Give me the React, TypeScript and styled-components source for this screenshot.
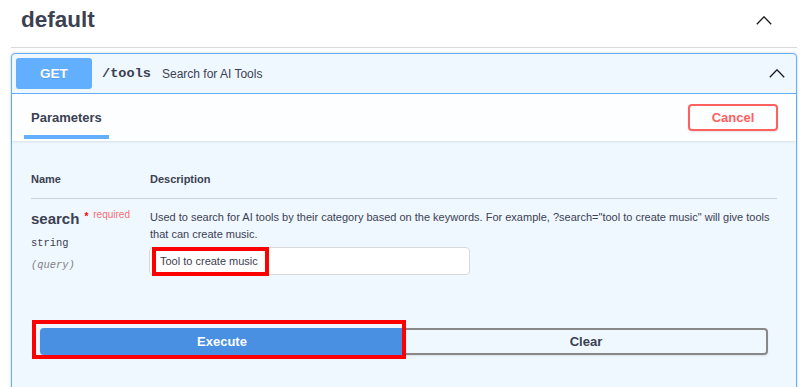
import React from "react";
import styled, { createGlobalStyle } from "styled-components";

const Global = createGlobalStyle`
  html, body { margin: 0; padding: 0; background: #fff; }
  body { font-family: "Liberation Sans", Arial, sans-serif; color: #3b4151; overflow: hidden; width: 800px; height: 387px; }
  * { box-sizing: border-box; }
`;

const Page = styled.div`
  padding: 0 3px 0 11px;
`;

const TagHeader = styled.div`
  display: flex;
  align-items: center;
  justify-content: space-between;
  height: 48px;
  padding: 0 25px 6px 10px;
  border-bottom: 1px solid #d9d9d9;
`;

const TagTitle = styled.h3`
  margin: 0;
  font-size: 22.5px;
  font-weight: 700;
  color: #3b4151;
  line-height: 1;
`;

const Chevron = styled.svg`
  display: block;
  flex: none;
`;

const OpBlock = styled.div`
  margin-top: 5px;
  border: 1px solid #61affe;
  border-radius: 4px;
  background: #eff7ff;
  box-shadow: 0 0 3px rgba(0, 0, 0, 0.19);
  height: 400px;
`;

const Summary = styled.div`
  display: flex;
  align-items: center;
  height: 40px;
  padding: 0 11px 0 4px;
  border-bottom: 1px solid #61affe;
`;

const MethodBadge = styled.span`
  display: flex;
  align-items: center;
  justify-content: center;
  width: 76px;
  height: 31px;
  border-radius: 3px;
  background: #61affe;
  color: #fff;
  font-weight: 700;
  font-size: 13.5px;
  text-shadow: 0 1px 0 rgba(0, 0, 0, 0.1);
`;

const Path = styled.span`
  margin-left: 10px;
  font-family: "Liberation Mono", "DejaVu Sans Mono", monospace;
  font-weight: 700;
  font-size: 13.6px;
  color: #3b4151;
`;

const SummaryDesc = styled.span`
  flex: 1;
  margin-left: 11px;
  font-size: 12px;
  color: #3b4151;
`;

const SectionHeader = styled.div`
  display: flex;
  align-items: center;
  justify-content: space-between;
  height: 47px;
  padding: 0 18px 0 7px;
  background: rgba(255, 255, 255, 0.8);
  box-shadow: 0 1px 2px rgba(0, 0, 0, 0.1);
`;

const TabItem = styled.div`
  position: relative;
  align-self: stretch;
  display: flex;
  align-items: center;
  padding: 0 12px;
  font-size: 13px;
  font-weight: 700;
  color: #3b4151;
  &::after {
    content: "";
    position: absolute;
    left: 5px;
    right: 5px;
    bottom: 2px;
    height: 4px;
    background: #61affe;
  }
`;

const OutlineButton = styled.button<{ $tone: "red" | "gray" }>`
  font-family: "Liberation Sans", Arial, sans-serif;
  font-weight: 700;
  font-size: 13px;
  background: transparent;
  cursor: pointer;
  padding: 0;
  border: 2px solid ${(p) => (p.$tone === "red" ? "#ff6060" : "#888")};
  color: ${(p) => (p.$tone === "red" ? "#ff6060" : "#3b4151")};
  border-radius: 4px;
  box-shadow: 0 1px 2px rgba(0, 0, 0, 0.1);
`;

const CancelButton = styled(OutlineButton)`
  width: 90px;
  height: 27px;
`;

const Body = styled.div`
  padding: 28px 19px 0 19px;
`;

const Table = styled.div`
  display: grid;
  grid-template-columns: 119px 1fr;
`;

const HeadCell = styled.div`
  font-size: 11px;
  font-weight: 700;
  line-height: 20px;
  padding-bottom: 9px;
  border-bottom: 1px solid rgba(59, 65, 81, 0.2);
`;

const NameCell = styled.div`
  padding-top: 11px;
`;

const ParamName = styled.div`
  display: flex;
  align-items: flex-start;
  font-size: 15px;
  font-weight: 700;
  line-height: 18px;
`;

const Star = styled.span`
  color: red;
  font-size: 10px;
  line-height: 10px;
  margin-left: 5px;
  margin-top: 2px;
`;

const Required = styled.span`
  color: rgba(255, 0, 0, 0.6);
  font-size: 10px;
  font-weight: 400;
  line-height: 10px;
  margin-left: 5px;
`;

const ParamType = styled.div`
  font-family: "Liberation Mono", "DejaVu Sans Mono", monospace;
  font-size: 10.4px;
  margin-top: 8px;
  line-height: 14px;
`;

const ParamIn = styled.div`
  font-family: "Liberation Mono", "DejaVu Sans Mono", monospace;
  font-style: italic;
  font-size: 10.4px;
  color: #808080;
  margin-top: 8px;
  line-height: 14px;
`;

const DescCell = styled.div`
  padding-top: 10px;
`;

const DescText = styled.p`
  margin: 0;
  font-size: 11px;
  line-height: 16.5px;
  color: #3b4151;
  max-width: 630px;
`;

const InputWrap = styled.div`
  position: relative;
  width: 321px;
  margin-top: 5px;
  margin-left: -1px;
`;

const TextInput = styled.input`
  display: block;
  width: 100%;
  height: 28px;
  padding: 0 10px;
  border: 1px solid #d9d9d9;
  border-radius: 4px;
  background: #fff;
  font-family: "Liberation Sans", Arial, sans-serif;
  font-size: 11px;
  color: #3b4151;
  outline: none;
`;

const Highlight = styled.span<{ $t: number; $r: number; $b: number; $l: number }>`
  position: absolute;
  top: ${(p) => p.$t}px;
  right: ${(p) => p.$r}px;
  bottom: ${(p) => p.$b}px;
  left: ${(p) => p.$l}px;
  border: 4px solid #f00;
  pointer-events: none;
`;

const ButtonGroup = styled.div`
  display: flex;
  margin-top: 53px;
  padding: 0 28px;
`;

const ExecWrap = styled.div`
  position: relative;
  width: 50%;
  flex: none;
  display: flex;
`;

const ExecuteButton = styled.button`
  flex: 1;
  height: 27px;
  padding: 0;
  border: 2px solid #4990e2;
  background: #4990e2;
  color: #fff;
  border-radius: 4px 0 0 4px;
  font-family: "Liberation Sans", Arial, sans-serif;
  font-weight: 700;
  font-size: 13px;
  box-shadow: 0 1px 2px rgba(0, 0, 0, 0.1);
`;

const ClearButton = styled(OutlineButton)`
  width: 50%;
  flex: none;
  height: 27px;
  border-radius: 0 4px 4px 0;
`;

const Up = ({ w, h }: { w: number; h: number }) => (
  <Chevron width={w} height={h} viewBox={`0 0 ${w} ${h}`}>
    <polyline
      points={`0.8,${h - 0.8} ${w / 2},0.8 ${w - 0.8},${h - 0.8}`}
      fill="none"
      stroke="#1a1a1a"
      strokeWidth="1.3"
    />
  </Chevron>
);

export default function App() {
  return (
    <Page>
      <Global />
      <TagHeader>
        <TagTitle>default</TagTitle>
        <Up w={16} h={9} />
      </TagHeader>
      <OpBlock>
        <Summary>
          <MethodBadge>GET</MethodBadge>
          <Path>/tools</Path>
          <SummaryDesc>Search for AI Tools</SummaryDesc>
          <Up w={16} h={9} />
        </Summary>
        <SectionHeader>
          <TabItem>Parameters</TabItem>
          <CancelButton $tone="red">Cancel</CancelButton>
        </SectionHeader>
        <Body>
          <Table>
            <HeadCell>Name</HeadCell>
            <HeadCell>Description</HeadCell>
            <NameCell>
              <ParamName>
                search<Star>*</Star>
                <Required>required</Required>
              </ParamName>
              <ParamType>string</ParamType>
              <ParamIn>(query)</ParamIn>
            </NameCell>
            <DescCell>
              <DescText>
                Used to search for AI tools by their category based on the keywords. For example,
                ?search="tool to create music" will give tools that can create music.
              </DescText>
              <InputWrap>
                <TextInput defaultValue="Tool to create music" />
                <Highlight $t={0} $r={201} $b={-1} $l={3} />
              </InputWrap>
            </DescCell>
          </Table>
        </Body>
        <ButtonGroup>
          <ExecWrap>
            <ExecuteButton>Execute</ExecuteButton>
            <Highlight $t={-8} $r={-2} $b={-4} $l={-8} />
          </ExecWrap>
          <ClearButton $tone="gray">Clear</ClearButton>
        </ButtonGroup>
      </OpBlock>
    </Page>
  );
}
